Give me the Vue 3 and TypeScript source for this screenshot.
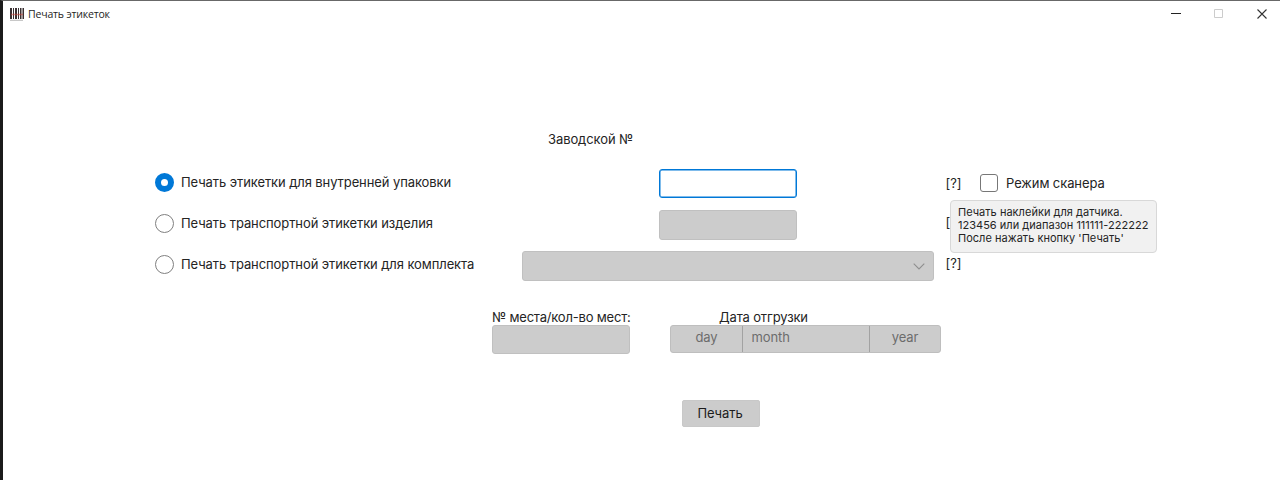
<script setup lang="ts">
import { ref } from 'vue'

type Mode = 'inner' | 'transport' | 'kit'

const mode = ref<Mode>('inner')
const serial = ref('')
const scanner = ref(false)
const rows: { id: Mode; label: string }[] = [
  { id: 'inner', label: 'Печать этикетки для внутренней упаковки' },
  { id: 'transport', label: 'Печать транспортной этикетки изделия' },
  { id: 'kit', label: 'Печать транспортной этикетки для комплекта' },
]
const tip = ['Печать наклейки для датчика.', "123456 или диапазон 111111-222222", "После нажать кнопку 'Печать'"]
</script>

<template>
  <div class="window">
    <header class="titlebar">
      <svg class="logo" width="14" height="13" viewBox="0 0 14 13">
        <path d="M0 0h2v11H0zM3 0h1v11H3zM5 0h2v11H5zM8 0h1v11H8zM10 0h1.500v11H10zM12.500 0h1.500v11h-1.500z" fill="#3a3032" />
        <path d="M1 6.500h12" stroke="#c8453d" stroke-width="1.500" stroke-opacity=".55" />
        <path d="M0 12.300h13" stroke="#bbb" />
      </svg>
      <span class="title">Печать этикеток</span>
      <div class="controls">
        <svg width="10" height="10" viewBox="0 0 10 10"><path d="M0 4.500h10" stroke="#222" /></svg>
        <svg width="10" height="10" viewBox="0 0 10 10"><path d="M.5.500h8v8h-8z" fill="none" stroke="#ccc" /></svg>
        <svg width="10" height="10" viewBox="0 0 10 10"><path d="M.5.500l9 9M9.500.500l-9 9" stroke="#333" stroke-width="1.100" /></svg>
      </div>
    </header>

    <main class="form">
      <div class="heading">Заводской №</div>

      <div v-for="row in rows" :key="row.id" class="row">
        <label class="choice" @click="mode = row.id">
          <span class="radio" :class="{ on: mode === row.id }"></span>
          <span class="text">{{ row.label }}</span>
        </label>
        <div class="entry" :class="row.id">
          <div v-if="row.id === 'kit'" class="field combo">
            <svg width="12" height="7" viewBox="0 0 12 7"><path d="M.7.700L6 6 11.300.700" fill="none" stroke="#8f8f8f" stroke-width="1.100" /></svg>
          </div>
          <input v-else-if="row.id === 'inner'" v-model="serial" class="field active" />
          <div v-else class="field"></div>
        </div>
        <div class="help">
          <span class="q" :class="row.id">[?]</span>
          <div v-if="row.id === 'inner'" class="tooltip">
            <div v-for="line in tip" :key="line">{{ line }}</div>
          </div>
        </div>
        <label v-if="row.id === 'inner'" class="scan" @click="scanner = !scanner">
          <span class="box" :class="{ checked: scanner }"></span>
          <span class="text">Режим сканера</span>
        </label>
      </div>

      <div class="extra">
        <div class="places">
          <div class="text">№ места/кол-во мест:</div>
          <div class="field"></div>
        </div>
        <div class="shipping">
          <div class="text">Дата отгрузки</div>
          <div class="date">
            <span class="day">day</span>
            <span class="month">month</span>
            <span class="year">year</span>
          </div>
        </div>
      </div>

      <button class="print">Печать</button>
    </main>
  </div>
</template>

<style>
body { margin: 0; overflow: hidden; }
</style>

<style scoped>
.window {
  box-sizing: border-box;
  width: 1280px;
  height: 480px;
  border-left: 3px solid #1b1b1b;
  border-top: 1px solid #686868;
  background: #fff;
  color: #242424;
  font: 13px/16px Inter, "Noto Sans", sans-serif;
  letter-spacing: -0.09px;
}
.titlebar {
  display: flex;
  align-items: center;
  box-sizing: border-box;
  height: 27px;
  padding: 0 13px 1px 7px;
}
.title {
  margin-left: 4px;
  font: 10.5px/16px "Open Sans", "Noto Sans", sans-serif;
  letter-spacing: -0.17px;
}
.logo { margin-top: 1px; }
.controls { display: flex; gap: 33px; margin-left: auto; }
.form { display: flex; flex-direction: column; }
.heading { height: 33px; margin: 103px 0 0 545px; }
.row {
  display: flex;
  height: 29px;
  margin: 5px 0 7px 152px;
}
.choice { display: flex; align-items: center; width: 367px; height: 26px; }
.radio {
  box-sizing: border-box;
  width: 19px;
  height: 19px;
  margin-right: 7px;
  border: 1px solid #808080;
  border-radius: 50%;
}
.radio.on { border: 6px solid #0078d7; }
.text { white-space: nowrap; }
.entry { display: flex; box-sizing: border-box; padding-left: 136.5px; width: 412px; }
.entry.kit { padding-left: 0; }
.field {
  box-sizing: border-box;
  width: 138px;
  height: 30px;
  padding: 0 8px;
  border: 1px solid #c0c0c0;
  border-radius: 3px;
  background: #ccc;
  font: inherit;
}
.active { height: 29px; border: 1.5px solid #0078d7; box-shadow: inset 0 0 0 .5px #0078d7; background: #fff; outline: none; }
.combo {
  display: flex;
  align-items: center;
  justify-content: flex-end;
  width: 412px;
}
.help { position: relative; box-sizing: content-box; width: 22px; padding: 6px 0 0 12px; }
.q { display: block; margin-left: -.5px; }
.q.kit, .q.transport { margin-top: -2px; }
.tooltip {
  position: absolute;
  top: 31px;
  left: 16px;
  z-index: 1;
  box-sizing: border-box;
  width: 207px;
  height: 53px;
  padding: 5px 7px;
  border: 1px solid #d8d8d8;
  border-radius: 4px;
  background: #f1f1f1;
  font-size: 11px;
  line-height: 13px;
  letter-spacing: 0.02px;
  white-space: nowrap;
}
.scan { display: flex; align-items: center; height: 28px; margin-left: 12px; }
.box {
  box-sizing: border-box;
  width: 18px;
  height: 18px;
  margin-right: 8px;
  border: 1px solid #777;
  border-radius: 3px;
}
.box.checked { background: #0078d7; }
.extra { display: flex; gap: 40px; margin: 22px 0 0 489px; }
.places { width: 138px; }
.places .text { letter-spacing: -0.2px; }
.places .field { height: 29px; }
.shipping .text { margin-left: 49px; letter-spacing: -0.15px; }
.date {
  display: flex;
  box-sizing: border-box;
  width: 271px;
  height: 28px;
  border: 1px solid #bebebe;
  border-radius: 3px;
  background: #ccc;
  color: #6c6c6c;
  line-height: 23px;
}
.day { box-sizing: border-box; width: 72px; border-right: 1px solid #a2a2a2; text-align: center; }
.month { box-sizing: border-box; width: 127px; padding-left: 8.5px; border-right: 1px solid #a2a2a2; }
.year { flex: 1; text-align: center; }
.print {
  width: 78px;
  height: 27px;
  margin: 46px 0 0 679px;
  padding: 0 2px 2px 0;
  border: 1px solid #c8c8c8;
  border-radius: 2px;
  background: #ccc;
  color: #1c1c1c;
  font: inherit;
  letter-spacing: -0.09px;
}
</style>
